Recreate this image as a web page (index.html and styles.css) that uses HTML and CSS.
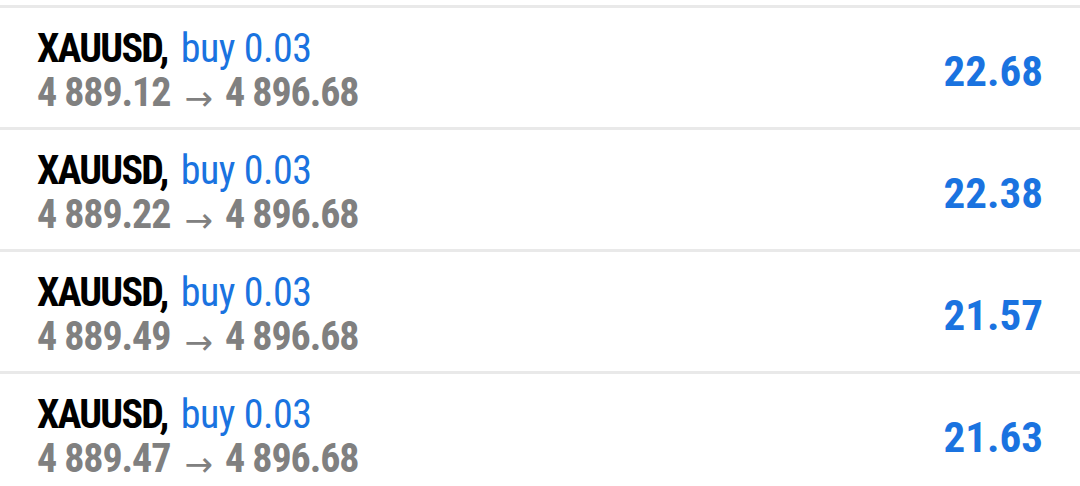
FILE: index.html
```html
<!DOCTYPE html>
<html lang="en">
<head>
    <meta charset="UTF-8">
    <meta name="viewport" content="width=device-width, initial-scale=1.0">
    <title>Positions</title>
    <link rel="stylesheet" href="styles.css">
</head>
<body>
    <div class="list">
        <div class="row">
            <div class="info">
                <div class="title"><span class="symbol">XAUUSD,</span> <span class="side">buy 0.03</span></div>
                <div class="prices">4 889.12 <span class="arrow">→</span> 4 896.68</div>
            </div>
            <div class="profit">22.68</div>
        </div>
        <div class="row">
            <div class="info">
                <div class="title"><span class="symbol">XAUUSD,</span> <span class="side">buy 0.03</span></div>
                <div class="prices">4 889.22 <span class="arrow">→</span> 4 896.68</div>
            </div>
            <div class="profit">22.38</div>
        </div>
        <div class="row">
            <div class="info">
                <div class="title"><span class="symbol">XAUUSD,</span> <span class="side">buy 0.03</span></div>
                <div class="prices">4 889.49 <span class="arrow">→</span> 4 896.68</div>
            </div>
            <div class="profit">21.57</div>
        </div>
        <div class="row">
            <div class="info">
                <div class="title"><span class="symbol">XAUUSD,</span> <span class="side">buy 0.03</span></div>
                <div class="prices">4 889.47 <span class="arrow">→</span> 4 896.68</div>
            </div>
            <div class="profit">21.63</div>
        </div>
    </div>
</body>
</html>
```
FILE: styles.css
```css
body {
    margin: 0;
    background: #fff;
    font-family: "Roboto Condensed", Roboto, sans-serif;
}
.list {
    padding-top: 5px;
}
.row {
    box-sizing: border-box;
    display: flex;
    align-items: center;
    justify-content: space-between;
    height: 122px;
    padding: 6px 37px 0;
    border-top: 3px solid #e9e9e9;
}
.title, .prices {
    font-size: 40px;
    line-height: 44px;
    white-space: nowrap;
}
.symbol {
    font-weight: 700;
    letter-spacing: -1.8px;
    color: #000;
}
.side {
    margin-left: 4px;
    letter-spacing: -0.5px;
    color: #1a73e0;
}
.prices {
    font-weight: 700;
    letter-spacing: -1.1px;
    color: #808080;
}
.arrow {
    font-weight: 400;
    font-family: "DejaVu Sans", sans-serif;
    font-size: 34px;
    line-height: 0;
    letter-spacing: 0;
    vertical-align: -4px;
    margin: 0 4px 0 6px;
}
.profit {
    font-size: 43px;
    font-weight: 700;
    color: #1a73e0;
}
```
